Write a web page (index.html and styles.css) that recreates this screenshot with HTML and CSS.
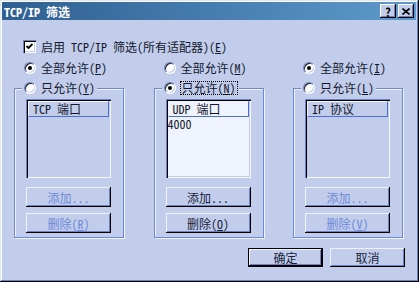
FILE: index.html
```html
<!DOCTYPE html>
<html lang="zh-CN">
<head>
  <meta charset="UTF-8">
  <title>TCP/IP 筛选</title>
  <link rel="stylesheet" href="styles.css">
</head>
<body>
  <div class="window">
    <div class="titlebar">
      <span class="title">TCP/IP 筛选</span>
      <div class="caption-buttons">
        <span class="cap-btn">?</span>
        <span class="cap-btn">
          <svg width="8" height="7" viewBox="0 0 8 7"><path d="M0.5 0.5 L7.5 6.5 M7.5 0.5 L0.5 6.5" stroke="#000" stroke-width="1.6"/></svg>
        </span>
      </div>
    </div>

    <div class="content">
      <label class="check-row">
        <span class="checkbox"><svg width="9" height="9" viewBox="0 0 9 9"><polyline points="1.5,4 3.5,6 7.5,2" fill="none" stroke="#000" stroke-width="1.8"/></svg></span>
        <span>启用 TCP/IP 筛选(所有适配器)(<u>E</u>)</span>
      </label>

      <div class="columns">
        <div class="column">
          <div class="radio-row"><span class="radio on"></span><span>全部允许(<u>P</u>)</span></div>
          <fieldset class="group">
            <legend><div class="radio-row"><span class="radio"></span><span>只允许(<u>Y</u>)</span></div></legend>
            <div class="listbox disabled"><div class="list-header">TCP 端口</div></div>
            <button class="btn" disabled>添加...</button>
            <button class="btn" disabled>删除(<u>R</u>)</button>
          </fieldset>
        </div>

        <div class="column">
          <div class="radio-row"><span class="radio"></span><span>全部允许(<u>M</u>)</span></div>
          <fieldset class="group">
            <legend><div class="radio-row"><span class="radio on"></span><span class="focus">只允许(<u>N</u>)</span></div></legend>
            <div class="listbox">
              <div class="list-header">UDP 端口</div>
              <div class="list-item">4000</div>
            </div>
            <button class="btn">添加...</button>
            <button class="btn">删除(<u>O</u>)</button>
          </fieldset>
        </div>

        <div class="column">
          <div class="radio-row"><span class="radio on"></span><span>全部允许(<u>I</u>)</span></div>
          <fieldset class="group">
            <legend><div class="radio-row"><span class="radio"></span><span>只允许(<u>L</u>)</span></div></legend>
            <div class="listbox disabled"><div class="list-header">IP 协议</div></div>
            <button class="btn" disabled>添加...</button>
            <button class="btn" disabled>删除(<u>V</u>)</button>
          </fieldset>
        </div>
      </div>

      <div class="footer">
        <button class="btn default">确定</button>
        <button class="btn">取消</button>
      </div>
    </div>
  </div>
</body>
</html>
```

FILE: styles.css
```css
body {
  margin: 0;
  font-family: "Noto Sans Mono CJK SC", "Noto Sans CJK SC", sans-serif;
  font-size: 12px;
  line-height: 13px;
  color: #14182e;
}

.window {
  width: 419px;
  height: 282px;
  box-sizing: border-box;
  padding: 2px 3px 3px 2px;
  background: #c1cdea;
  box-shadow: inset -1px -1px #000, inset 1px 1px #dfe6f7, inset -2px -2px #6c7fbf, inset 2px 2px #fff;
}

.titlebar {
  display: flex;
  align-items: center;
  justify-content: space-between;
  height: 18px;
  padding: 0 2px;
  background: linear-gradient(to right, #2f5f91, #5e9acb);
}

.title {
  color: #fff;
  font-weight: bold;
}

.caption-buttons {
  display: flex;
  gap: 2px;
}

.cap-btn {
  width: 16px;
  height: 14px;
  box-sizing: border-box;
  display: flex;
  align-items: center;
  justify-content: center;
  background: #c1cdea;
  box-shadow: inset -1px -1px #000, inset 1px 1px #fff, inset -2px -2px #6c7fbf;
  font-weight: bold;
  color: #000;
}

.content {
  padding: 0 13px 0 12px;
}

.check-row {
  display: flex;
  align-items: center;
  gap: 5px;
  height: 13px;
  margin: 20px 0 0 9px;
}

.checkbox {
  width: 13px;
  height: 13px;
  box-sizing: border-box;
  display: flex;
  align-items: center;
  justify-content: center;
  background: #fff;
  box-shadow: inset 1px 1px #6c7fbf, inset 2px 2px #000, inset -1px -1px #fff, inset -2px -2px #c1cdea;
}

.columns {
  display: flex;
  justify-content: space-between;
  margin-top: 9px;
}

.column {
  width: 110px;
}

.radio-row {
  display: flex;
  align-items: center;
  gap: 5px;
  height: 12px;
  line-height: 12px;
  white-space: nowrap;
}

.column > .radio-row {
  padding-left: 10px;
}

.radio {
  position: relative;
  flex: none;
  width: 12px;
  height: 12px;
  box-sizing: border-box;
  border: 1px solid;
  border-color: #6c7fbf #fff #fff #6c7fbf;
  border-radius: 50%;
  background: #fff;
  box-shadow: inset 1px 1px #222, inset -1px -1px #c1cdea;
}

.radio.on::after {
  content: "";
  position: absolute;
  left: 3px;
  top: 3px;
  width: 4px;
  height: 4px;
  border-radius: 50%;
  background: #000;
}

.group {
  min-width: 0;
  margin: 8px 0 0;
  padding: 0 0 4px;
  border: 1px solid #6d88d4;
  box-shadow: inset 1px 1px #eef2fc, 1px 1px #eef2fc;
}

.group legend {
  margin-left: 7px;
  padding: 0 2px;
  background: #c1cdea;
}

.focus {
  outline: 1px dotted #000;
  padding: 0 1px;
}

.listbox {
  width: 85px;
  height: 79px;
  box-sizing: border-box;
  margin: 5px 0 0 11px;
  padding: 2px;
  background: #eff3fd;
  box-shadow: inset 1px 1px #6c7fbf, inset 2px 2px #000, inset -1px -1px #f5f8ff, inset -2px -2px #c1cdea;
}

.listbox.disabled {
  background: #c1cdea;
}

.list-header {
  height: 16px;
  box-sizing: border-box;
  padding-left: 4px;
  line-height: 14px;
  border: 1px solid;
  border-color: #f0f4ff #4e6ed2 #4e6ed2 #f0f4ff;
}

.list-item {
  height: 13px;
  line-height: 13px;
}

.btn {
  display: block;
  width: 85px;
  height: 20px;
  margin: 9px 0 0 11px;
  padding: 0;
  border: 0;
  font: inherit;
  color: #1a1f3c;
  background: #c1cdea;
  box-shadow: inset -1px -1px #000, inset 1px 1px #eef2fc, inset -2px -2px #6c7fbf;
}

.btn + .btn {
  margin-top: 6px;
}

.btn:disabled {
  color: #6f89d9;
}

.footer {
  display: flex;
  justify-content: flex-end;
  gap: 7px;
  margin: 10px -2px 0 0;
}

.footer .btn {
  width: 75px;
  height: 19px;
  margin: 0;
}

.footer .btn.default {
  box-shadow: inset 0 0 0 1px #000, inset -2px -2px #000, inset 2px 2px #eef2fc, inset -3px -3px #6c7fbf;
}
```
